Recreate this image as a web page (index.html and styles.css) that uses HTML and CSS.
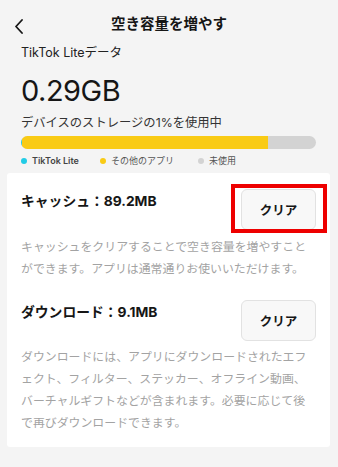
FILE: index.html
```html
<!doctype html>
<html lang="ja">
<head>
<meta charset="utf-8">
<title>空き容量を増やす</title>
<meta name="viewport" content="width=device-width, initial-scale=1">
<link rel="stylesheet" href="styles.css">
</head>
<body>

  <!-- header -->
  <div class="topbar">
    <svg class="back" width="10" height="16" viewBox="0 0 10 16">
      <path d="M8 1 L2 7.5 L8 14" fill="none" stroke="#161616" stroke-width="1.8" stroke-linecap="round" stroke-linejoin="round"/>
    </svg>
    <div class="title">空き容量を増やす</div>
  </div>

  <!-- storage summary -->
  <div class="summary">
    <div class="label">TikTok Liteデータ</div>
    <div class="amount">0.29GB</div>
    <div class="usage">デバイスのストレージの1%を使用中</div>
    <div class="bar">
      <div class="bar-app" style="width:0.3%"></div>
      <div class="bar-other" style="width:83.5%"></div>
    </div>
    <div class="legend">
      <span class="key key-app"><i></i>TikTok Lite</span>
      <span class="key key-other"><i></i>その他のアプリ</span>
      <span class="key key-free"><i></i>未使用</span>
    </div>
  </div>

  <!-- cache / downloads -->
  <div class="card">
    <div class="row">
      <div class="row-name">キャッシュ：89.2MB</div>
      <div class="marked">
        <button class="clear">クリア</button>
      </div>
    </div>
    <p class="desc">キャッシュをクリアすることで空き容量を増やすことができます。アプリは通常通りお使いいただけます。</p>

    <div class="row row2">
      <div class="row-name">ダウンロード：9.1MB</div>
      <button class="clear">クリア</button>
    </div>
    <p class="desc">ダウンロードには、アプリにダウンロードされたエフェクト、フィルター、ステッカー、オフライン動画、バーチャルギフトなどが含まれます。必要に応じて後で再びダウンロードできます。</p>
  </div>

</body>
</html>
```

FILE: styles.css
```css
* { box-sizing: border-box; }

body {
	margin: 0;
	background-color: #f4f4f4;
	color: #161616;
	font-family: "Inter", "Noto Sans CJK JP", sans-serif;
}

/* header */

.topbar {
	height: 44px;
	padding-top: 4px;
	position: relative;
	display: flex;
	justify-content: center;
}

.back {
	position: absolute;
	left: 14px;
	top: 19px;
}

.title {
	line-height: 40px;
	font-size: 14.5px;
	font-weight: 700;
	letter-spacing: 0;
}

/* summary */

.summary {
	padding: 0 22px 0 21px;
}

.label {
	font-size: 12.5px;
	line-height: 18px;
	color: #222;
}

.amount {
	margin-top: 12px;
	font-size: 29px;
	line-height: 34px;
	font-weight: 400;
	letter-spacing: -0.5px;
}

.usage {
	margin-top: 6px;
	font-size: 12.3px;
	line-height: 18px;
	color: #333;
}

.bar {
	margin-top: 4px;
	height: 13px;
	border-radius: 7px;
	background-color: #d3d3d3;
	display: flex;
	overflow: hidden;
}

.bar-app { background-color: #22cce6; }
.bar-other { background-color: #f9cb15; }

.legend {
	margin-top: 5px;
	display: flex;
	font-size: 9px;
	line-height: 14px;
	color: #555;
}

.key {
	display: flex;
	align-items: center;
}

.key i {
	width: 6px;
	height: 6px;
	border-radius: 50%;
	margin-right: 5px;
}

.key-app { font-weight: 600; color: #444; }
.key-app i { background-color: #22cce6; }
.key-other { margin-left: 21px; }
.key-other i { background-color: #f9cb15; }
.key-free { margin-left: 24px; }
.key-free i { background-color: #d3d3d3; }

/* card */

.card {
	margin: 5px 8px 0 7px;
	padding: 16px 14px 14px 14px;
	background-color: #fff;
	border-radius: 3px;
}

.row {
	display: flex;
	justify-content: space-between;
	align-items: flex-start;
}

.row2 { margin-top: 21px; }

.row-name {
	margin-top: 2px;
	font-size: 13.8px;
	line-height: 20px;
	font-weight: 700;
}

.clear {
	width: 75px;
	height: 41px;
	background-color: #f8f8f8;
	border: 1px solid #e2e2e2;
	border-radius: 6px;
	font-family: "Noto Sans CJK JP", sans-serif;
	font-size: 12.5px;
	font-weight: 700;
	color: #161616;
	padding: 0;
}

/* red highlight drawn over the first button */
.marked {
	position: relative;
}

.marked::after {
	content: "";
	position: absolute;
	left: -10px;
	top: -5px;
	right: -11px;
	bottom: -3px;
	border: 4px solid #ee0000;
}

.desc {
	margin: 5px 0 0 0;
	font-family: "Noto Sans CJK JP", sans-serif;
	font-size: 11.9px;
	line-height: 22px;
	color: #a3a3a3;
}

.row2 + .desc { margin-top: 4px; }
```
